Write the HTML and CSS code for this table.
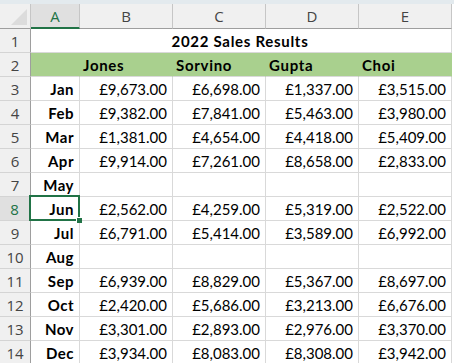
FILE: index.html
```html
<!DOCTYPE html>
<html>
<head>
<meta charset="utf-8">
<link rel="stylesheet" href="styles.css">
</head>
<body>
<div class="strip"></div>
<div class="sheet">
  <div class="corner"><span class="tri"></span></div>
  <div class="ch sel">A</div>
  <div class="ch">B</div>
  <div class="ch">C</div>
  <div class="ch">D</div>
  <div class="ch">E</div>

  <div class="rh">1</div>
  <div class="c title">2022 Sales Results</div>

  <div class="rh">2</div>
  <div class="c g"></div>
  <div class="c g hd">Jones</div>
  <div class="c g hd">Sorvino</div>
  <div class="c g hd">Gupta</div>
  <div class="c g hd">Choi</div>

  <div class="rh">3</div>
  <div class="c mon">Jan</div>
  <div class="c num">£9,673.00</div>
  <div class="c num">£6,698.00</div>
  <div class="c num">£1,337.00</div>
  <div class="c num">£3,515.00</div>

  <div class="rh">4</div>
  <div class="c mon">Feb</div>
  <div class="c num">£9,382.00</div>
  <div class="c num">£7,841.00</div>
  <div class="c num">£5,463.00</div>
  <div class="c num">£3,980.00</div>

  <div class="rh">5</div>
  <div class="c mon">Mar</div>
  <div class="c num">£1,381.00</div>
  <div class="c num">£4,654.00</div>
  <div class="c num">£4,418.00</div>
  <div class="c num">£5,409.00</div>

  <div class="rh">6</div>
  <div class="c mon">Apr</div>
  <div class="c num">£9,914.00</div>
  <div class="c num">£7,261.00</div>
  <div class="c num">£8,658.00</div>
  <div class="c num">£2,833.00</div>

  <div class="rh">7</div>
  <div class="c mon">May</div>
  <div class="c num"></div>
  <div class="c num"></div>
  <div class="c num"></div>
  <div class="c num"></div>

  <div class="rh sel-row">8</div>
  <div class="c mon active">Jun</div>
  <div class="c num">£2,562.00</div>
  <div class="c num">£4,259.00</div>
  <div class="c num">£5,319.00</div>
  <div class="c num">£2,522.00</div>

  <div class="rh">9</div>
  <div class="c mon">Jul</div>
  <div class="c num">£6,791.00</div>
  <div class="c num">£5,414.00</div>
  <div class="c num">£3,589.00</div>
  <div class="c num">£6,992.00</div>

  <div class="rh">10</div>
  <div class="c mon">Aug</div>
  <div class="c num"></div>
  <div class="c num"></div>
  <div class="c num"></div>
  <div class="c num"></div>

  <div class="rh">11</div>
  <div class="c mon">Sep</div>
  <div class="c num">£6,939.00</div>
  <div class="c num">£8,829.00</div>
  <div class="c num">£5,367.00</div>
  <div class="c num">£8,697.00</div>

  <div class="rh">12</div>
  <div class="c mon">Oct</div>
  <div class="c num">£2,420.00</div>
  <div class="c num">£5,686.00</div>
  <div class="c num">£3,213.00</div>
  <div class="c num">£6,676.00</div>

  <div class="rh">13</div>
  <div class="c mon">Nov</div>
  <div class="c num">£3,301.00</div>
  <div class="c num">£2,893.00</div>
  <div class="c num">£2,976.00</div>
  <div class="c num">£3,370.00</div>

  <div class="rh">14</div>
  <div class="c mon">Dec</div>
  <div class="c num">£3,934.00</div>
  <div class="c num">£8,083.00</div>
  <div class="c num">£8,308.00</div>
  <div class="c num">£3,942.00</div>
</div>
</body>
</html>
```

FILE: styles.css
```css
html, body {
  margin: 0;
  padding: 0;
  background: #ffffff;
  overflow: hidden;
}
.strip {
  height: 4px;
  background: #e3eaee;
}
.sheet {
  display: grid;
  grid-template-columns: 31px 49px 93px 93px 93px 93px;
  grid-template-rows: 25px;
  grid-auto-rows: 24px;
  font-family: "Lato", "Liberation Sans", sans-serif;
  font-size: 15px;
  color: #000;
}
.sheet > div {
  box-sizing: border-box;
  border-right: 1px solid #d9d9d9;
  border-bottom: 1px solid #d9d9d9;
}
.corner {
  background: #f0f0f0;
  position: relative;
  border-right-color: #c6c6c6 !important;
  border-bottom-color: #9e9e9e !important;
}
.tri {
  position: absolute;
  right: 3px;
  bottom: 3px;
  width: 0;
  height: 0;
  border-left: 16px solid transparent;
  border-bottom: 16px solid #dcdcdc;
}
.ch {
  background: #f0f0f0;
  border-right-color: #c6c6c6 !important;
  border-bottom-color: #9e9e9e !important;
  display: flex;
  align-items: center;
  justify-content: center;
  font-family: "Open Sans", "Noto Sans", sans-serif;
  font-size: 15px;
  color: #444;
}
.ch.sel {
  background: #e0e0e0;
  color: #217346;
  border-bottom: 2px solid #217346 !important;
  padding-top: 1px;
}
.rh {
  background: #f0f0f0;
  border-right-color: #9e9e9e !important;
  border-bottom-color: #d4d4d4 !important;
  display: flex;
  align-items: center;
  justify-content: center;
  font-family: "Open Sans", "Noto Sans", sans-serif;
  font-size: 15px;
  color: #444;
}
.rh.sel-row {
  background: #e0e0e0;
  color: #217346;
  border-right: 2px solid #217346 !important;
}
.c {
  display: flex;
  align-items: flex-end;
  padding: 0 5px 2px 3px;
  white-space: nowrap;
}
.title {
  grid-column: 2 / span 5;
  justify-content: center;
  font-weight: 700;
  letter-spacing: 0.7px;
}
.g {
  background: #a9d08e;
  border-right-color: #a9d08e !important;
}
.hd {
  font-weight: 700;
  letter-spacing: 0.7px;
}
.mon {
  justify-content: flex-end;
  font-weight: 700;
  letter-spacing: 0.5px;
}
.num {
  justify-content: flex-end;
}
.active {
  position: relative;
}
.active::before {
  content: "";
  position: absolute;
  left: -2px;
  top: -2px;
  right: -1px;
  bottom: -1px;
  border: 2px solid #217346;
}
.active::after {
  content: "";
  position: absolute;
  right: -3px;
  bottom: -3px;
  width: 5px;
  height: 5px;
  background: #217346;
  border-left: 1px solid #fff;
  border-top: 1px solid #fff;
}
```
